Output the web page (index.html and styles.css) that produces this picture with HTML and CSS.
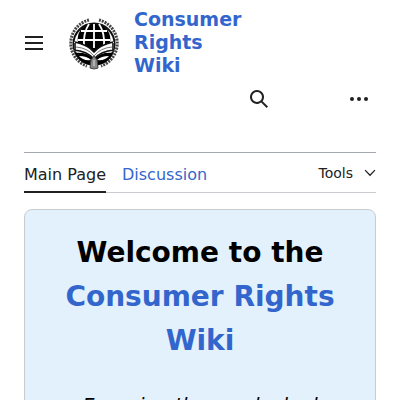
FILE: index.html
```
<!DOCTYPE html>
<html lang="en">
<head>
<meta charset="utf-8">
<meta name="viewport" content="width=device-width, initial-scale=1">
<title>Consumer Rights Wiki</title>
<link rel="stylesheet" href="styles.css">
</head>
<body>
<header class="header">
  <div class="brand">
    <button class="icon-button menu" aria-label="Main menu">
      <svg width="20" height="20" viewBox="0 0 20 20"><path d="M1 3h18v2H1zm0 6h18v2H1zm0 6h18v2H1z"/></svg>
    </button>
    <a class="logo" href="#">
      <svg class="emblem" viewBox="0 0 54 54" aria-hidden="true">
        <g fill="none">
          <path d="M22 4A24 24 0 0 0 20 50M32 4A24 24 0 0 1 34 50" stroke-width="3" stroke-dasharray="2 1" stroke="#444"/>
          <circle cx="27" cy="28" r="20.500" stroke="#111" stroke-width="2"/>
        </g>
        <path d="M11 27C9 15 17 8 27 8s18 7 16 19l-16 9z" fill="#000"/>
        <path d="M27 8v24M11 24h32M14 15h26M22 8q-6 9-5 22M32 8q6 9 5 22" fill="none" stroke="#fff" stroke-width="1.800"/>
        <path d="M8 37q12-1 19 5q7-6 19-5q-5 12-19 12T8 37z" fill="#000"/>
        <path d="M12 40q8 0 12 4q-8 1-12-4zM42 40q-8 0-12 4q8 1 12-4z" fill="#fff"/>
        <path d="M7 26q13 3 20 10q7-7 20-10v9q-13 1-20 8q-7-7-20-8z" fill="#fff"/>
        <path d="M8 26q13 3 19 10q6-7 19-10M7 34q13 1 20 9q7-8 20-9M8 27v7M46 27v7" fill="none" stroke="#111" stroke-width="1.600"/>
        <path d="M9 31q12 1 18 9q6-8 18-9" fill="none" stroke="#777"/>
        <path d="M27 40l3 4 1 8q-4 2-8 0l1-8z" fill="#888" stroke="#444"/>
        <path d="M27 44v6" stroke="#ddd"/>
      </svg>
      <span class="wordmark">Consumer Rights Wiki</span>
    </a>
  </div>
  <div class="actions">
    <button class="icon-button" aria-label="Search">
      <svg width="20" height="20" viewBox="0 0 20 20"><path d="M12.200 13.600a7 7 0 1 1 1.400-1.400l5.400 5.400-1.400 1.400zM3 8a5 5 0 1 0 10 0A5 5 0 0 0 3 8"/></svg>
    </button>
    <button class="icon-button more" aria-label="Personal tools">
      <svg width="20" height="20" viewBox="0 0 20 20"><circle cx="3" cy="10" r="2"/><circle cx="10" cy="10" r="2"/><circle cx="17" cy="10" r="2"/></svg>
    </button>
  </div>
</header>
<main class="page">
  <div class="toolbar">
    <nav class="tabs" aria-label="Namespaces">
      <a class="tab selected" href="#">Main Page</a>
      <a class="tab" href="#">Discussion</a>
    </nav>
    <button class="tools">Tools
      <svg width="12" height="12" viewBox="0 0 20 20"><path d="M10 15.250 1 6l1.500-1.500L10 12l7.500-7.500L19 6z"/></svg>
    </button>
  </div>
  <section class="welcome">
    <h1>Welcome to the <a href="#">Consumer Rights Wiki</a></h1>
    <p>Exposing the overlooked</p>
  </section>
</main>
</body>
</html>
```
FILE: styles.css
```
* { box-sizing: border-box; }
body {
  margin: 0;
  padding: 8px 24px 0;
  background: #fff;
  color: #202122;
  font: 16px/24px "DejaVu Sans", sans-serif;
}
a { color: #36c; text-decoration: none; }
button { border: 0; padding: 0; background: none; color: inherit; font: inherit; cursor: pointer; }
svg { display: block; fill: currentColor; }
.brand { display: flex; align-items: center; }
.icon-button { display: grid; place-items: center; width: 32px; height: 32px; flex: none; }
.menu { margin: 0 17px 0 -6px; }
.logo { display: flex; align-items: center; gap: 13px; }
.emblem { width: 54px; height: 54px; flex: none; }
.wordmark { max-width: 115px; font-size: 19px; line-height: 23px; font-weight: 700; }
.actions { display: flex; justify-content: flex-end; gap: 68px; padding: 6px 1px 0 0; }
.page { margin-top: 37px; border-top: 1px solid #a2a9b1; }
.toolbar { display: flex; justify-content: space-between; height: 40px; border-bottom: 1px solid #c8ccd1; }
.tabs { display: flex; gap: 16px; }
.tab { height: 40px; padding-top: 10px; }
.selected { color: #202122; border-bottom: 2px solid #202122; }
.tools { display: flex; align-items: center; gap: 11px; font-size: 14px; }
.welcome {
  margin-top: 16px;
  padding: 21px 32px;
  border: 1px solid #c8ccd1;
  border-radius: 8px;
  background: #e3f1fd;
  color: #000;
  text-align: center;
}
h1 { margin: 0; font-size: 28px; line-height: 44px; }
.welcome p { margin: 28px 0 0; font-size: 19px; line-height: 28px; font-style: italic; }
```
